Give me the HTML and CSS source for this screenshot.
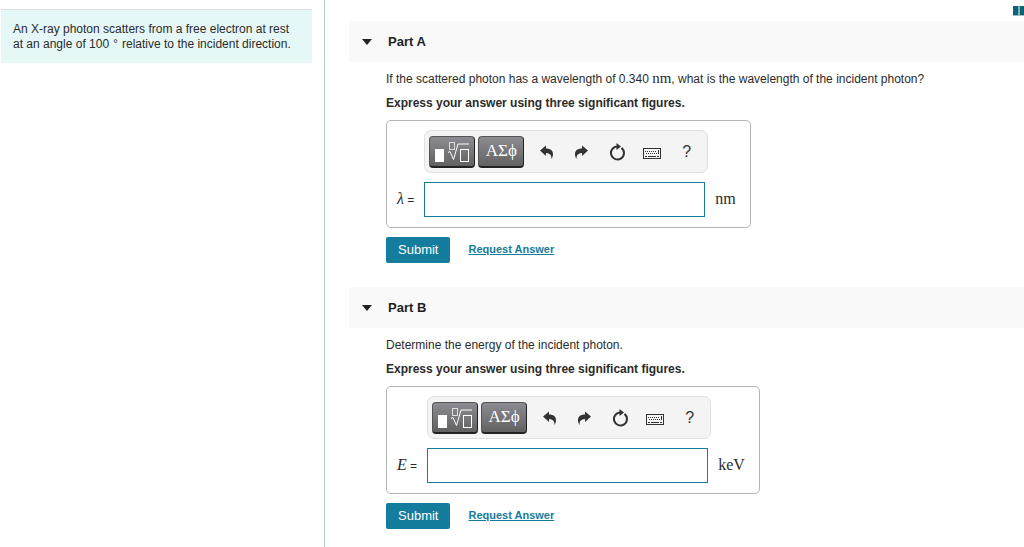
FILE: index.html
```html
<!DOCTYPE html>
<html lang="en">
<head>
    <meta charset="UTF-8">
    <meta name="viewport" content="width=device-width, initial-scale=1.0">
    <title>X-ray Photon Scattering</title>
    <link rel="stylesheet" href="styles.css">
</head>
<body>
    <!-- Shared toolbar icons -->
    <svg class="icon-defs" aria-hidden="true">
        <symbol id="icon-template" viewBox="0 0 36 22">
            <rect x="1" y="9" width="9" height="13" fill="#fff"/>
            <g fill="none" stroke="#fff">
                <rect x="15.5" y="2.5" width="5" height="7" stroke="#ddd"/>
                <path d="M14 12.500l2-1 3.500 8 4.500-15.500h11"/>
                <rect x="26.500" y="9.500" width="8" height="12"/>
            </g>
        </symbol>
        <symbol id="icon-undo" viewBox="0 0 14 14">
            <path d="M0 5.500L6 .5v3c4.500 0 7 2.200 7 5.500 0 2-.6 3.700-1.600 5 .3-3.600-1.400-5.800-5.400-5.900v3z" fill="#333"/>
        </symbol>
        <symbol id="icon-redo" viewBox="0 0 14 14">
            <path d="M13 5.500L7 .5v3C2.500 3.500 0 5.700 0 9c0 2 .6 3.700 1.600 5-.3-3.600 1.400-5.800 5.400-5.900v3z" fill="#333"/>
        </symbol>
        <symbol id="icon-reset" viewBox="0 0 16 18">
            <path d="M12.500 4.900A6.500 6.500 0 1 1 8.500 3.500" fill="none" stroke="#333" stroke-width="2"/>
            <path d="M7.500 0l4.500 3.500-4.500 3.500z" fill="#333"/>
        </symbol>
        <symbol id="icon-keyboard" viewBox="0 0 18 11">
            <rect x=".5" y=".5" width="17" height="10" fill="none" stroke="#333"/>
            <path d="M2 3.500h12M3 5.500h11" stroke="#333" stroke-dasharray="1 1"/>
            <path d="M15.500 2v4M2 8.500h2M5 8.500h8M14 8.500h2" stroke="#333"/>
        </symbol>
    </svg>

    <div class="page">
        <aside class="sidebar">
            <div class="intro">An X-ray photon scatters from a free electron at rest at an angle of 100 <span class="degree">∘</span> relative to the incident direction.</div>
        </aside>

        <main class="content">
            <div class="tools">
                <a class="review" href="#" aria-label="Review">
                    <svg width="16" height="10" viewBox="0 0 16 10"><path d="M0 0h5.500v9H0zM6.500 0h5.500v9H6.500z" fill="#0b6374"/><path d="M0 9.500h12" stroke="#9cc0c7"/></svg>
                </a>
            </div>

            <!-- Part A -->
            <section class="part">
                <h2 class="part-header"><span class="arrow"></span>Part A</h2>
                <div class="part-body">
                    <p>If the scattered photon has a wavelength of 0.340 <span class="math">nm</span>, what is the wavelength of the incident photon?</p>
                    <p><strong>Express your answer using three significant figures.</strong></p>
                    <form>
                        <div class="answer-box">
                            <div class="toolbar">
                                <button type="button" class="palette" aria-label="Templates"><svg width="36" height="22"><use href="#icon-template"/></svg></button>
                                <button type="button" class="palette">ΑΣϕ</button>
                                <div class="tool-group">
                                    <button type="button" class="tool" aria-label="Undo"><svg width="14" height="14"><use href="#icon-undo"/></svg></button>
                                    <button type="button" class="tool" aria-label="Redo"><svg width="14" height="14"><use href="#icon-redo"/></svg></button>
                                    <button type="button" class="tool" aria-label="Reset"><svg width="16" height="18"><use href="#icon-reset"/></svg></button>
                                    <button type="button" class="tool keyboard" aria-label="Keyboard shortcuts"><svg width="18" height="11"><use href="#icon-keyboard"/></svg></button>
                                    <button type="button" class="tool">?</button>
                                </div>
                            </div>
                            <label class="symbol" for="wavelength"><i>λ</i> =</label>
                            <input type="text" id="wavelength" class="answer">
                            <span class="unit">nm</span>
                        </div>
                        <div class="actions">
                            <button type="submit" class="submit">Submit</button>
                            <a class="request" href="#">Request Answer</a>
                        </div>
                    </form>
                </div>
            </section>

            <!-- Part B -->
            <section class="part">
                <h2 class="part-header"><span class="arrow"></span>Part B</h2>
                <div class="part-body">
                    <p>Determine the energy of the incident photon.</p>
                    <p><strong>Express your answer using three significant figures.</strong></p>
                    <form>
                        <div class="answer-box">
                            <div class="toolbar">
                                <button type="button" class="palette" aria-label="Templates"><svg width="36" height="22"><use href="#icon-template"/></svg></button>
                                <button type="button" class="palette">ΑΣϕ</button>
                                <div class="tool-group">
                                    <button type="button" class="tool" aria-label="Undo"><svg width="14" height="14"><use href="#icon-undo"/></svg></button>
                                    <button type="button" class="tool" aria-label="Redo"><svg width="14" height="14"><use href="#icon-redo"/></svg></button>
                                    <button type="button" class="tool" aria-label="Reset"><svg width="16" height="18"><use href="#icon-reset"/></svg></button>
                                    <button type="button" class="tool keyboard" aria-label="Keyboard shortcuts"><svg width="18" height="11"><use href="#icon-keyboard"/></svg></button>
                                    <button type="button" class="tool">?</button>
                                </div>
                            </div>
                            <label class="symbol" for="energy"><i>E</i> =</label>
                            <input type="text" id="energy" class="answer">
                            <span class="unit">keV</span>
                        </div>
                        <div class="actions">
                            <button type="submit" class="submit">Submit</button>
                            <a class="request" href="#">Request Answer</a>
                        </div>
                    </form>
                </div>
            </section>
        </main>
    </div>
</body>
</html>
```
FILE: styles.css
```css
* {
    box-sizing: border-box;
}

body {
    margin: 0;
    background-color: #fff;
    color: #2b2b2b;
    font-family: "Liberation Sans", Arial, sans-serif;
    font-size: 12px;
    line-height: 15px;
}

button {
    font-family: inherit;
    border: none;
    padding: 0;
    cursor: pointer;
}

.icon-defs {
    display: none;
}

.page {
    display: flex;
    min-height: 100vh;
}

/* Left column */
.sidebar {
    flex: none;
    width: 325px;
    padding: 9px 12px 0 1px;
    border-right: 1px solid #b4c7dc;
}

.intro {
    padding: 12px 12px 11px;
    background-color: #e6f7f7;
    border-top: 1px solid #d8dedc;
}

.degree {
    font-family: "DejaVu Sans", sans-serif;
    font-size: 10px;
    line-height: 8px;
    vertical-align: 4px;
}

/* Right column */
.content {
    flex: 1;
    min-width: 0;
    padding-left: 24px;
}

.tools {
    display: flex;
    justify-content: flex-end;
    height: 21px;
    padding-top: 6px;
    overflow: hidden;
}

.review {
    margin-right: -5px;
}

.review svg {
    display: block;
}

.part {
    margin-bottom: 24px;
}

.part-header {
    display: flex;
    align-items: center;
    gap: 16px;
    height: 41px;
    margin: 0;
    padding-left: 13px;
    background-color: #f9f9f9;
    color: #1e1e1e;
    font-size: 13px;
}

.arrow {
    border: 5px solid transparent;
    border-top: 6px solid #222;
    border-bottom: none;
}

.part-body {
    padding: 10px 24px 0 37px;
}

.part-body p {
    margin: 0 0 9px;
}

.math,
.unit,
.symbol i {
    font-family: "Liberation Serif", serif;
    font-size: 16px;
    line-height: 15px;
}

.math {
    font-size: 15px;
    line-height: 12px;
}

/* Answer entry */
.answer-box {
    display: inline-grid;
    grid-template-columns: auto 284px auto;
    column-gap: 7px;
    row-gap: 9px;
    align-items: center;
    padding: 9px 14px 10px 10px;
    border: 1px solid #b5b5b5;
    border-radius: 5px;
    vertical-align: top;
}

.toolbar {
    grid-column: 2;
    display: flex;
    align-items: center;
    gap: 3px;
    height: 43px;
    padding-left: 4px;
    background-color: #f4f4f4;
    border: 1px solid #e0e0e0;
    border-radius: 7px;
}

.palette {
    display: flex;
    align-items: center;
    justify-content: center;
    width: 46px;
    height: 32px;
    background: linear-gradient(#8d8b92, #616161);
    border: 1px solid #555;
    border-right-color: #222;
    border-bottom: 2px solid #222;
    border-radius: 4px;
    color: #fff;
    font-family: "Liberation Serif", serif;
    font-size: 17px;
}

.tool-group {
    display: flex;
    padding-left: 2px;
}

.tool {
    display: flex;
    align-items: center;
    justify-content: center;
    width: 35px;
    height: 32px;
    background: none;
    color: #333;
    font-size: 16px;
}

.keyboard {
    padding-top: 3px;
}

.symbol {
    grid-column: 1;
    padding-right: 3px;
    white-space: nowrap;
}

.unit {
    padding-bottom: 2px;
}

.answer {
    width: 281px;
    height: 35px;
    padding: 0 8px;
    border: 1px solid #1a7a99;
    font-size: 14px;
    outline: none;
}

.actions {
    display: flex;
    align-items: center;
    gap: 18px;
    margin-top: 9px;
}

.submit {
    height: 26px;
    padding: 0 12px 2px;
    background-color: #147c9c;
    border-radius: 2px;
    color: #fff;
    font-size: 13px;
}

.request {
    padding-bottom: 2px;
    color: #147c9c;
    font-size: 11px;
    font-weight: bold;
}
```
